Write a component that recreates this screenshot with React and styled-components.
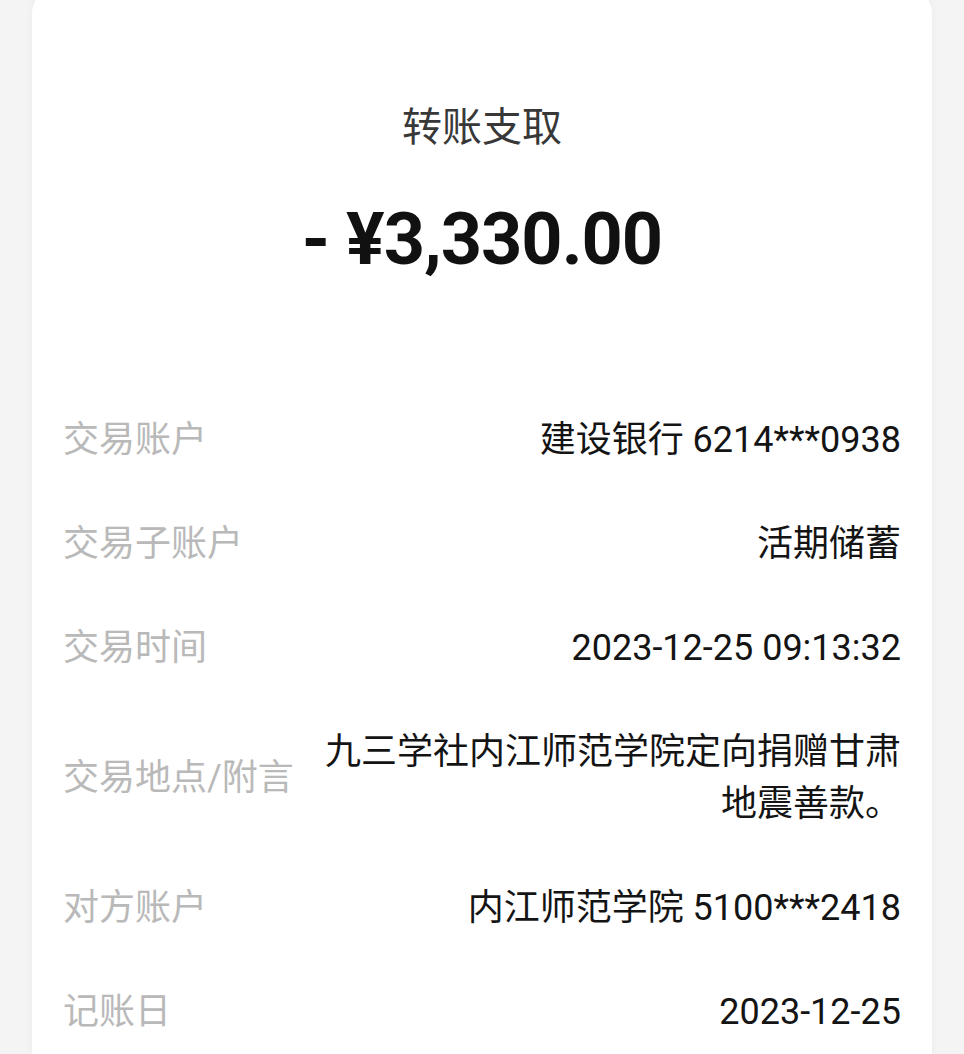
import React from 'react';
import styled, { createGlobalStyle } from 'styled-components';

const GlobalStyle = createGlobalStyle`
  html, body {
    margin: 0;
    padding: 0;
    background: #f4f4f4;
  }

  body {
    font-family: Roboto, "Noto Sans CJK SC", "Noto Sans", sans-serif;
    -webkit-font-smoothing: antialiased;
  }
`;

const details = [
  { label: '交易账户', value: '建设银行 6214***0938' },
  { label: '交易子账户', value: '活期储蓄' },
  { label: '交易时间', value: '2023-12-25 09:13:32' },
  { label: '交易地点/附言', value: '九三学社内江师范学院定向捐赠甘肃地震善款。' },
  { label: '对方账户', value: '内江师范学院 5100***2418' },
  { label: '记账日', value: '2023-12-25' },
];

const App = () => {
  return (
    <>
      <GlobalStyle />
      <Page>
        <Card>
          <Title>转账支取</Title>
          <Amount>- ¥3,330.00</Amount>
          <DetailList>
            {details.map((item) => (
              <DetailRow key={item.label}>
                <Label>{item.label}</Label>
                <Value>{item.value}</Value>
              </DetailRow>
            ))}
          </DetailList>
        </Card>
      </Page>
    </>
  );
};

const Page = styled.div`
  min-height: 100vh;
  overflow: hidden;
`;

const Card = styled.section`
  margin: -14px 32px 0;
  padding: 116px 31px 40px;
  background: #ffffff;
  border-radius: 28px;
  box-shadow: 0 0 8px rgba(0, 0, 0, 0.04);
`;

const Title = styled.h2`
  margin: 0;
  text-align: center;
  font-size: 40px;
  line-height: 52px;
  font-weight: 400;
  color: #383838;
`;

const Amount = styled.div`
  margin-top: 46px;
  text-align: center;
  font-size: 72px;
  line-height: 80px;
  font-weight: 700;
  letter-spacing: -1px;
  color: #111111;
`;

const DetailList = styled.div`
  margin-top: 108px;
  display: flex;
  flex-direction: column;
`;

const DetailRow = styled.div`
  display: flex;
  align-items: center;
  justify-content: space-between;
  gap: 24px;
  padding: 26px 0;
  font-size: 36px;
  line-height: 52px;
`;

const Label = styled.span`
  flex-shrink: 0;
  color: #b9b9b9;
`;

const Value = styled.span`
  text-align: right;
  color: #141414;
`;

export default App;
